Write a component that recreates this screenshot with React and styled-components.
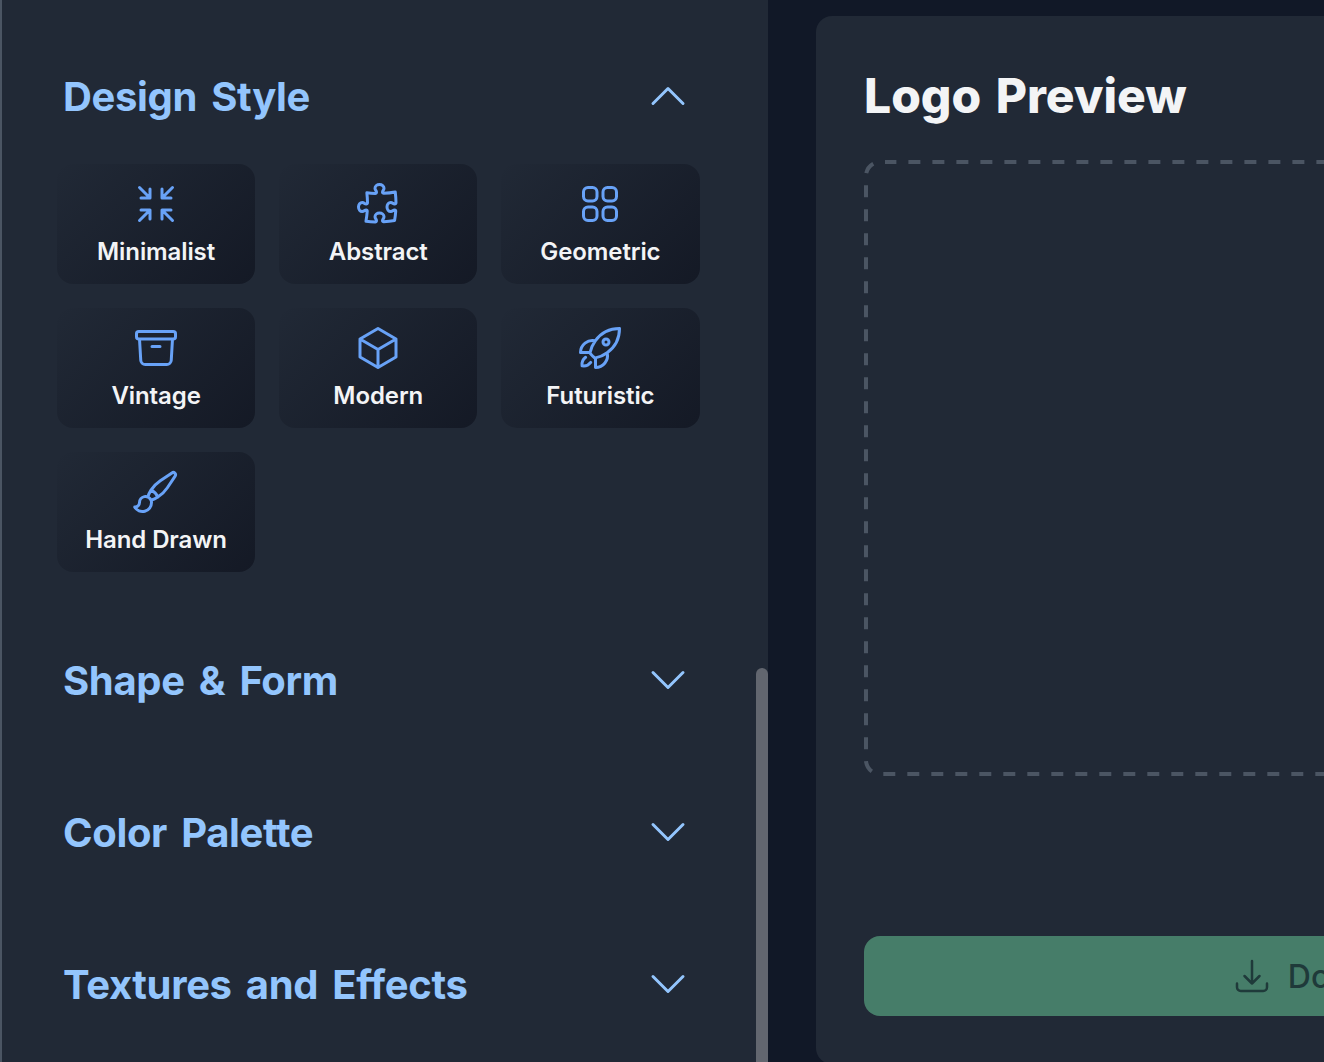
import React from "react";
import styled, { createGlobalStyle } from "styled-components";
import {
  HiOutlineArrowsPointingIn,
  HiOutlinePuzzlePiece,
  HiOutlineSquares2X2,
  HiOutlineArchiveBox,
  HiOutlineCube,
  HiOutlineRocketLaunch,
  HiOutlinePaintBrush,
  HiOutlineChevronUp,
  HiOutlineChevronDown,
  HiOutlineArrowDownTray,
} from "react-icons/hi2";

const styles = [
  { name: "Minimalist", Icon: HiOutlineArrowsPointingIn },
  { name: "Abstract", Icon: HiOutlinePuzzlePiece },
  { name: "Geometric", Icon: HiOutlineSquares2X2 },
  { name: "Vintage", Icon: HiOutlineArchiveBox },
  { name: "Modern", Icon: HiOutlineCube },
  { name: "Futuristic", Icon: HiOutlineRocketLaunch },
  { name: "Hand Drawn", Icon: HiOutlinePaintBrush },
];

const collapsed = ["Shape & Form", "Color Palette", "Textures and Effects"];

export default function App() {
  return (
    <Page>
      <GlobalStyle />
      <Sidebar>
        <Section $open>
          <SectionHeader>
            <SectionTitle>Design Style</SectionTitle>
            <HiOutlineChevronUp size={48} />
          </SectionHeader>
          <StyleGrid>
            {styles.map(({ name, Icon }) => (
              <StyleCard key={name}>
                <Icon size={48} />
                <StyleLabel>{name}</StyleLabel>
              </StyleCard>
            ))}
          </StyleGrid>
        </Section>
        {collapsed.map((title) => (
          <Section key={title}>
            <SectionHeader>
              <SectionTitle>{title}</SectionTitle>
              <HiOutlineChevronDown size={48} />
            </SectionHeader>
          </Section>
        ))}
        <ScrollThumb />
      </Sidebar>
      <Main>
        <PreviewCard>
          <PreviewTitle>Logo Preview</PreviewTitle>
          <DropArea>
            {/* 12px dashes, the css dashed border draws them too short */}
            <DashFrame width="1024" height="616" fill="none">
              <path
                d="M21 2H16A14 14 0 0 0 2 16V600A14 14 0 0 0 16 614H1008A14 14 0 0 0 1022 600V16A14 14 0 0 0 1008 2Z"
                stroke="#4b5563"
                strokeWidth="4"
                strokeDasharray="12 12"
                strokeDashoffset="12"
              />
            </DashFrame>
          </DropArea>
          <DownloadButton>
            <HiOutlineArrowDownTray size={40} />
            <span>Download Logo</span>
          </DownloadButton>
        </PreviewCard>
      </Main>
    </Page>
  );
}

// Styled Components
const GlobalStyle = createGlobalStyle`
  html, body {
    margin: 0;
    height: 100%;
    overflow: hidden;
    background: #111827;
  }
`;

const Page = styled.div`
  display: flex;
  width: 1324px;
  height: 1062px;
  overflow: hidden;
  font-family: "Inter", "Liberation Sans", sans-serif;
`;

const Sidebar = styled.aside`
  position: relative;
  flex: 0 0 768px;
  box-sizing: border-box;
  height: 1062px;
  padding: 72px 68.5px 0 55px;
  overflow: hidden;
  background: #212936;
  border-left: 2px solid #4b5563;
`;

const Section = styled.section`
  padding-bottom: ${(props) => (props.$open ? "84px" : "104px")};
`;

const SectionHeader = styled.div`
  display: flex;
  align-items: center;
  justify-content: space-between;
  height: 48px;
  margin: 0 7.5px 0 6px;
  color: #93c5fd;
`;

const SectionTitle = styled.h2`
  margin: 0;
  font-size: 40px;
  font-weight: 700;
  letter-spacing: -0.35px;
  word-spacing: 5px;
  color: #93c5fd;
`;

const StyleGrid = styled.div`
  display: grid;
  grid-template-columns: repeat(3, 1fr);
  gap: 24px;
  margin-top: 44px;
`;

const StyleCard = styled.div`
  display: flex;
  flex-direction: column;
  align-items: center;
  box-sizing: border-box;
  height: 120px;
  padding-top: 16px;
  border-radius: 16px;
  background: linear-gradient(135deg, #212936, #141925);
  color: #68a2f7;
`;

const StyleLabel = styled.div`
  margin-top: 8px;
  font-size: 24px;
  line-height: 32px;
  font-weight: 600;
  letter-spacing: -0.1px;
  color: #f3f4f6;
`;

const ScrollThumb = styled.div`
  position: absolute;
  top: 668px;
  right: 0;
  width: 12px;
  height: 400px;
  border-radius: 6px 6px 0 0;
  background: #62666f;
`;

const Main = styled.main`
  flex: 0 0 auto;
  padding: 16px 0 0 48px;
  background: #111827;
`;

const PreviewCard = styled.div`
  display: flex;
  flex-direction: column;
  box-sizing: border-box;
  width: 1126px;
  height: 1048px;
  padding: 48px;
  border-radius: 16px;
  background: #212936;
`;

const PreviewTitle = styled.h1`
  margin: 0 0 32px;
  font-size: 48px;
  line-height: 64px;
  font-weight: 800;
  word-spacing: 4px;
  color: #f3f4f6;
`;

const DropArea = styled.div`
  position: relative;
  height: 616px;
`;

const DashFrame = styled.svg`
  position: absolute;
  top: 0;
  left: 0;
`;

const DownloadButton = styled.button`
  display: flex;
  align-items: center;
  justify-content: center;
  gap: 16px;
  height: 80px;
  margin-top: auto;
  border: 0;
  border-radius: 16px;
  background: #467d69;
  color: #1f3a3a;
  font-family: inherit;
  font-size: 32px;
  font-weight: 500;
`;
